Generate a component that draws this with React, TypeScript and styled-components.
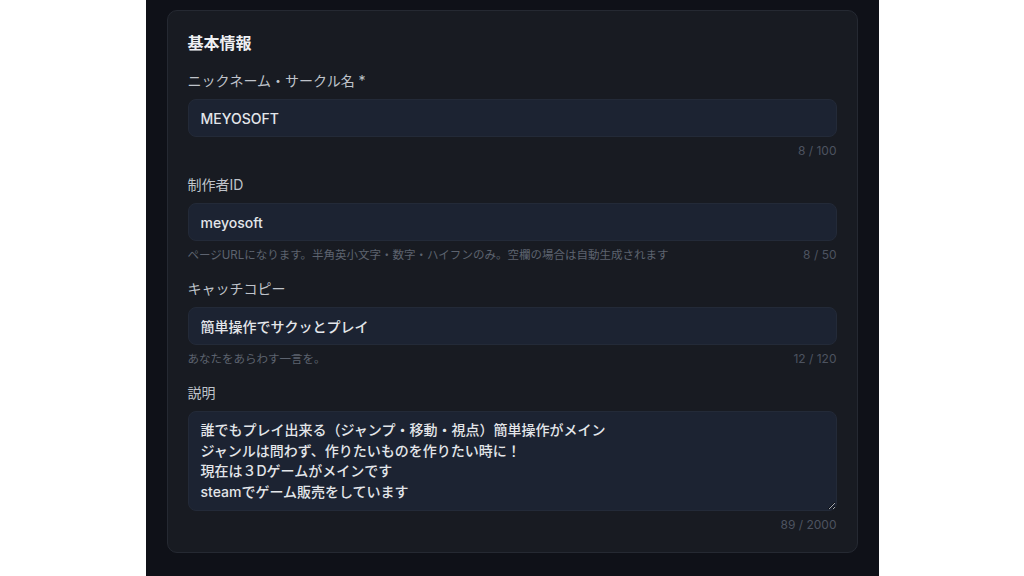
import React from 'react';
import styled, { createGlobalStyle } from 'styled-components';

const GlobalStyle = createGlobalStyle`
  html, body {
    margin: 0;
    padding: 0;
    background: #ffffff;
  }
  body {
    font-family: Inter, "Noto Sans CJK JP", sans-serif;
    -webkit-font-smoothing: antialiased;
  }
`;

const Page = styled.div`
  display: flex;
  justify-content: center;
  width: 1024px;
  height: 576px;
  overflow: hidden;
`;

const Panel = styled.main`
  width: 733px;
  height: 576px;
  background: #0f1118;
  padding: 10px 21px 0 21px;
  box-sizing: border-box;
`;

const Card = styled.section`
  background: #181b22;
  border: 1px solid #252932;
  border-radius: 10px;
  padding: 20px 20px 19px 20px;
  display: flex;
  flex-direction: column;
  gap: 16px;
`;

const Title = styled.h2`
  margin: 0;
  font-size: 16px;
  line-height: 24px;
  font-weight: 700;
  color: #eef0f3;
`;

const Field = styled.div`
  display: flex;
  flex-direction: column;
`;

const Label = styled.label`
  font-size: 14px;
  line-height: 20px;
  color: #bfc3ca;
  margin-bottom: 8px;
`;

const inputBase = `
  box-sizing: border-box;
  width: 100%;
  background: #1c2332;
  border: 1px solid #232a38;
  border-radius: 8px;
  color: #e3e6ea;
  font-family: Inter, "Noto Sans CJK JP", sans-serif;
  font-size: 14px;
  font-weight: 500;
  outline: none;
`;

const TextInput = styled.input`
  ${inputBase}
  height: 38px;
  padding: 0 12px;
`;

const TextArea = styled.textarea`
  ${inputBase}
  height: 100px;
  padding: 8px 12px;
  line-height: 20.5px;
  resize: vertical;
  display: block;
`;

const Hint = styled.div`
  display: flex;
  justify-content: space-between;
  align-items: baseline;
  margin-top: 6px;
  font-size: 11.5px;
  line-height: 16px;
  color: #5d636f;
`;

const Counter = styled.span`
  margin-left: auto;
  font-size: 12px;
  font-family: Inter, sans-serif;
  color: #4d5360;
`;

type Row = {
  label: string;
  value: string;
  max: number;
  hint?: string;
  multi?: boolean;
};

const rows: Row[] = [
  { label: 'ニックネーム・サークル名 *', value: 'MEYOSOFT', max: 100 },
  {
    label: '制作者ID',
    value: 'meyosoft',
    max: 50,
    hint: 'ページURLになります。半角英小文字・数字・ハイフンのみ。空欄の場合は自動生成されます',
  },
  { label: 'キャッチコピー', value: '簡単操作でサクッとプレイ', max: 120, hint: 'あなたをあらわす一言を。' },
  {
    label: '説明',
    value:
      '誰でもプレイ出来る（ジャンプ・移動・視点）簡単操作がメイン\nジャンルは問わず、作りたいものを作りたい時に！\n現在は３Dゲームがメインです\nsteamでゲーム販売をしています',
    max: 2000,
    multi: true,
  },
];

const countOf = (r: Row) => (r.multi ? 89 : r.value.length);

export default function App() {
  return (
    <Page>
      <GlobalStyle />
      <Panel>
        <Card>
          <Title>基本情報</Title>
          {rows.map((r) => (
            <Field key={r.label}>
              <Label>{r.label}</Label>
              {r.multi ? (
                <TextArea defaultValue={r.value} spellCheck={false} />
              ) : (
                <TextInput defaultValue={r.value} spellCheck={false} />
              )}
              <Hint>
                {r.hint && <span>{r.hint}</span>}
                <Counter>
                  {countOf(r)} / {r.max}
                </Counter>
              </Hint>
            </Field>
          ))}
        </Card>
      </Panel>
    </Page>
  );
}
